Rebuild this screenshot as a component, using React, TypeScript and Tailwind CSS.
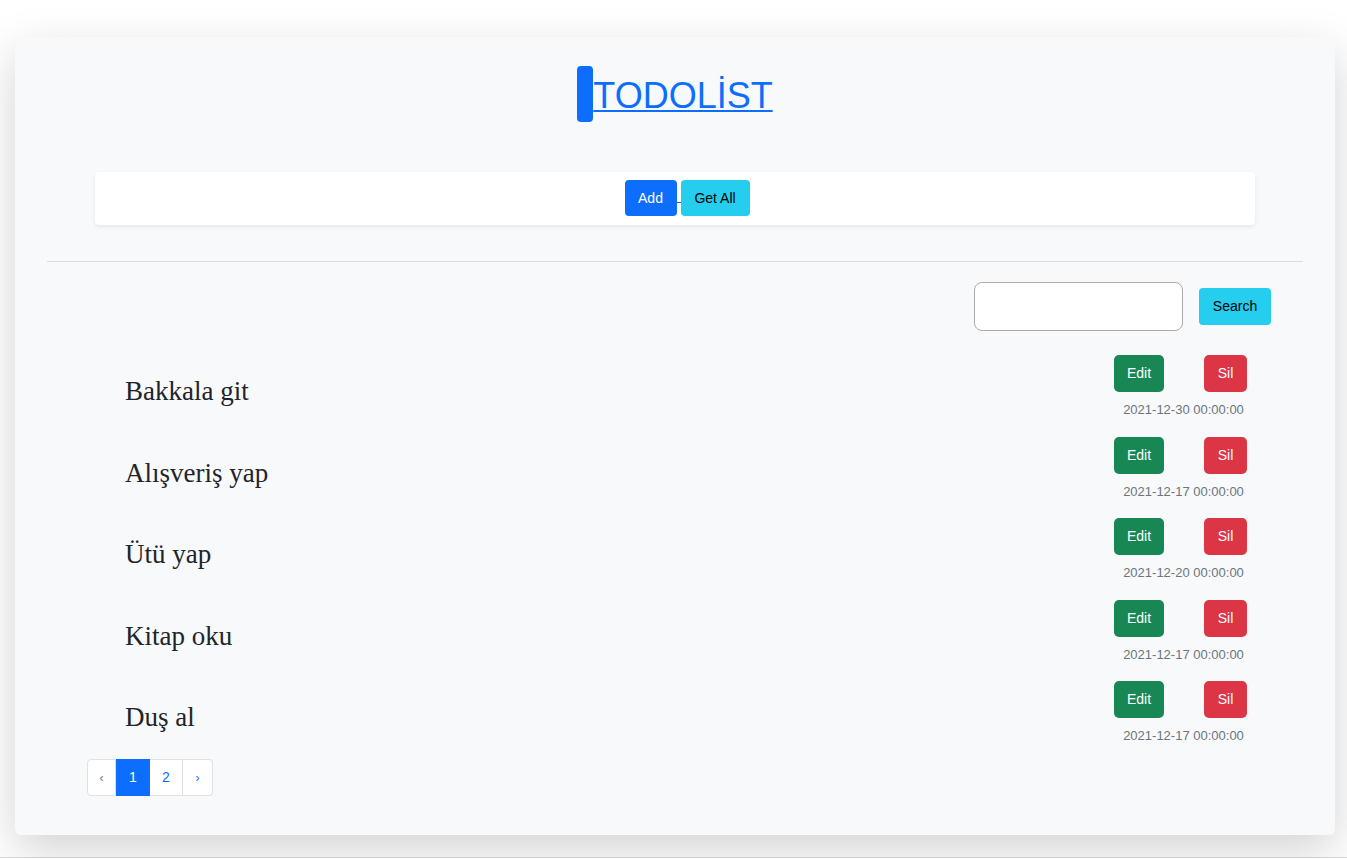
const todos = [
  { title: "Bakkala git", date: "2021-12-30 00:00:00" },
  { title: "Alışveriş yap", date: "2021-12-17 00:00:00" },
  { title: "Ütü yap", date: "2021-12-20 00:00:00" },
  { title: "Kitap oku", date: "2021-12-17 00:00:00" },
  { title: "Duş al", date: "2021-12-17 00:00:00" },
];

const sans = "font-['Liberation_Sans',Arial,sans-serif]";

const TodoRow = ({ title, date }: { title: string; date: string }) => (
  <div className="flex h-[63px] justify-between">
    <div className="pl-[110px] pt-[20px] font-['Liberation_Serif','Times_New_Roman',serif] text-[27px] leading-[1.2] text-[#212529]">
      {title}
    </div>
    <div className="flex flex-col items-center pr-[88px]">
      <div className="flex gap-[40px]">
        <button className="h-[37px] w-[50px] rounded-[5px] bg-[#198754] text-[14px] text-white">
          Edit
        </button>
        <button className="h-[37px] w-[43px] rounded-[5px] bg-[#dc3545] text-[14px] text-white">
          Sil
        </button>
      </div>
      <div className="mt-[9px] pl-[6px] text-[13px] leading-[18px] text-[#6c757d]">
        {date}
      </div>
    </div>
  </div>
);

const App = () => {
  return (
    <div className={`h-[858px] border-b border-[#dcdcdc] bg-white pt-[37px] ${sans}`}>
      <div className="ml-[15px] mr-[12px] h-[798px] rounded-md bg-[#f8f9fa] pt-[29px] shadow-[0_1rem_3rem_rgba(0,0,0,0.175)]">
        {/* header */}
        <div className="flex items-center justify-center">
          <div className="h-[56px] w-[16px] rounded-[4px] bg-[#0d6efd]" />
          <a
            href="#"
            className="mt-[4px] text-[36px] leading-none text-[#0d6efd] underline decoration-[2px] underline-offset-[2px]"
          >
            TODOLİST
          </a>
        </div>

        <div className="mx-[80px] mt-[50px] flex h-[53px] justify-center rounded-[4px] bg-white pl-[24px] pt-[8px] shadow-[0_0.125rem_0.25rem_rgba(0,0,0,0.075)]">
          <a href="#" className="flex h-[36px] items-end text-[#0d6efd] underline">
            <button className="h-[36px] w-[52px] rounded-[4px] bg-[#0d6efd] text-[14px] text-white">
              Add
            </button>
            <span className="mb-[13px] inline-block w-[4px] border-b border-[#0d6efd]" />
          </a>
          <button className="h-[36px] w-[69px] rounded-[4px] bg-[#25cdee] text-[14px] text-black">
            Get All
          </button>
        </div>

        <div className="mx-[32px] mt-[36px] h-px bg-[#dcdde0]" />

        <div className="mt-[20px] flex items-center justify-end gap-[16px] pr-[64px]">
          <input className="h-[49px] w-[209px] rounded-[8px] border border-[#aaaaaa] bg-white" />
          <button className="h-[37px] w-[72px] rounded-[4px] bg-[#25cdee] text-[14px] text-black">
            Search
          </button>
        </div>

        <div className="mt-[24px] flex flex-col gap-[18.5px]">
          {todos.map((t) => (
            <TodoRow key={t.title} title={t.title} date={t.date} />
          ))}
        </div>

        <div className="mt-[15px] pl-[72px]">
          <div className="flex h-[37px] w-fit text-[14px]">
            <span className="flex w-[29px] items-center justify-center rounded-l-[4px] border border-[#dee2e6] bg-white text-[12px] text-[#6c757d]">
              ‹
            </span>
            <span className="flex w-[34px] items-center justify-center border border-[#0d6efd] bg-[#0d6efd] text-white">
              1
            </span>
            <span className="flex w-[33px] items-center justify-center border-y border-r border-[#dee2e6] bg-white text-[#0d6efd]">
              2
            </span>
            <span className="flex w-[30px] items-center justify-center rounded-r-[4px] border-y border-r border-[#dee2e6] bg-white text-[12px] text-[#0d6efd]">
              ›
            </span>
          </div>
        </div>
      </div>
    </div>
  );
};

export default App;
